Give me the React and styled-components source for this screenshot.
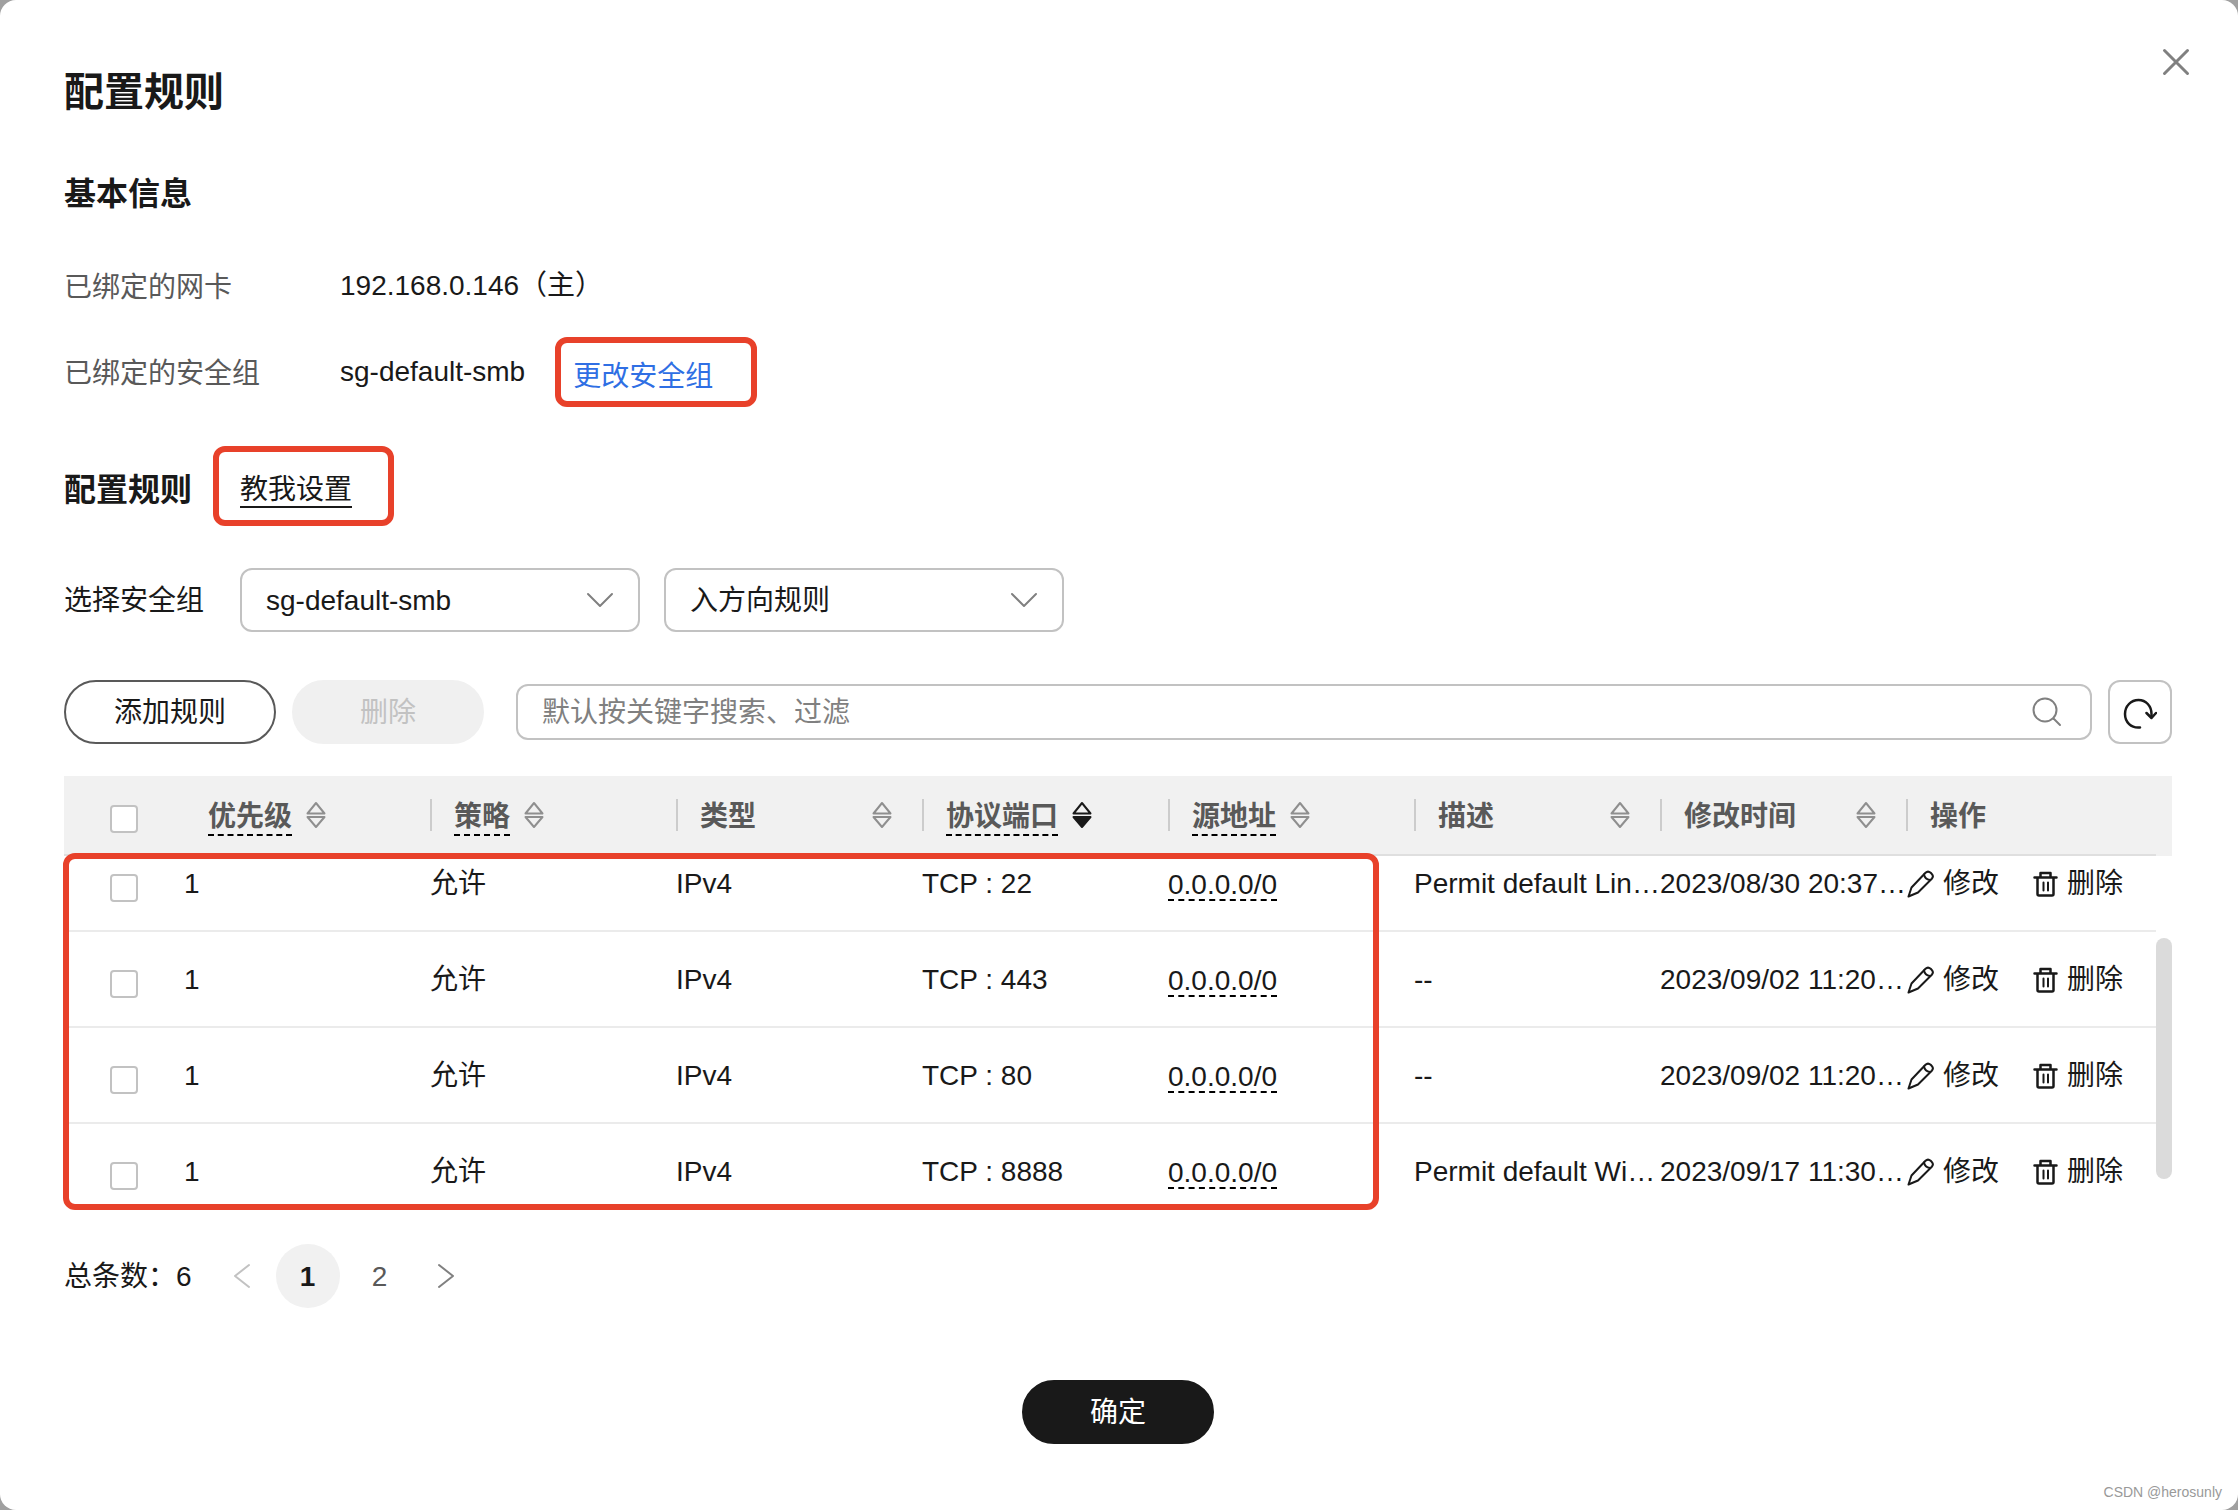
import React, { useLayoutEffect, useRef, useState } from "react";
import styled, { createGlobalStyle } from "styled-components";

const GlobalStyle = createGlobalStyle`
  *, *::before, *::after { box-sizing: border-box; }
  body {
    margin: 0;
    background: #a0a0a0;
  }
  body, button, input, select {
    font-family: "Liberation Sans", "Noto Sans CJK SC", sans-serif;
    font-size: 28px;
    line-height: 40px;
    color: #191919;
  }
  button { cursor: pointer; }
`;

const HEAD = 80;
const ROW = 96;
const VIEW = 340;
const ROWS_PER_PAGE = 5;

const Dialog = styled.main`
  position: relative;
  min-height: 100vh;
  padding: 48px 48px 66px 64px;
  border-radius: 16px;
  background: #fff;
`;

const DialogHeader = styled.header`
  display: flex;
  align-items: flex-start;
  justify-content: space-between;
`;

const Title = styled.h1`
  margin: 0;
  padding-top: 16px;
  font-size: 40px;
  line-height: 56px;
  font-weight: 700;
`;

const IconButton = styled.button`
  display: flex;
  align-items: center;
  justify-content: center;
  width: ${(p) => p.$width}px;
  height: ${(p) => p.$height}px;
  padding: 0;
  border: 0;
  background: none;
  color: ${(p) => p.$color || "#808080"};
`;

const Body = styled.div`
  padding-right: 18px;
`;

const SectionTitle = styled.h2`
  margin: 0;
  font-size: 32px;
  line-height: 48px;
  font-weight: 700;
`;

const BasicInfo = styled.section`
  padding-top: 50px;
`;

const InfoList = styled.dl`
  display: grid;
  grid-template-columns: 276px 1fr;
  row-gap: 42px;
  margin: 48px 0 0;
`;

const InfoLabel = styled.dt`
  line-height: 44px;
  color: #595959;
`;

const InfoValue = styled.dd`
  display: flex;
  align-items: center;
  height: 40px;
  margin: 0;
`;

const Marked = styled.span`
  display: flex;
  align-items: center;
  width: ${(p) => p.$width}px;
  height: ${(p) => p.$height}px;
  margin-left: ${(p) => p.$gap}px;
  padding: 10px 0 0 ${(p) => p.$pad}px;
  flex: none;
  border: 6px solid #e8412a;
  border-radius: 12px;
`;

const BlueLink = styled.a`
  color: #2f6fe4;
  text-decoration: none;
`;

const GuideLink = styled.a`
  color: #191919;
  line-height: 32px;
  border-bottom: 2px solid #191919;
  text-decoration: none;
`;

const RuleHeading = styled.div`
  display: flex;
  align-items: center;
  height: 80px;
  margin-top: 50px;

  & > h2 { padding-top: 8px; }
`;

const Filters = styled.div`
  display: flex;
  align-items: center;
  margin-top: 42px;
`;

const FilterLabel = styled.label`
  width: 176px;
  padding-top: 2px;
`;

const SelectBox = styled.span`
  display: grid;
  align-items: center;
  width: 400px;
  margin-right: 24px;
  color: #808080;

  & > * { grid-area: 1 / 1; }
  & > svg {
    justify-self: end;
    margin-right: 26px;
    pointer-events: none;
  }
`;

const Select = styled.select`
  width: 100%;
  height: 64px;
  padding: 2px 72px 0 24px;
  border: 2px solid #c2c2c2;
  border-radius: 12px;
  background: #fff;
  appearance: none;
`;

const Toolbar = styled.div`
  display: flex;
  align-items: center;
  gap: 16px;
  margin-top: 48px;
`;

const variants = {
  outline: "background: #fff; border-color: #595959; color: #191919;",
  disabled: "background: #f0f0f0; border-color: #f0f0f0; color: #c2c2c2; cursor: default;",
  primary: "background: #191919; border-color: #191919; color: #fff;",
};

const Pill = styled.button`
  width: ${(p) => p.$width}px;
  height: 64px;
  padding: 2px 0 0;
  flex: none;
  border: 2px solid;
  border-radius: 32px;
  ${(p) => variants[p.$variant]}
`;

const SearchBox = styled.label`
  display: flex;
  align-items: center;
  flex: 1;
  min-width: 0;
  height: 56px;
  margin-left: 16px;
  padding: 0 28px 0 24px;
  border: 2px solid #c2c2c2;
  border-radius: 12px;
  color: #808080;
`;

const SearchInput = styled.input`
  flex: 1;
  min-width: 0;
  padding: 2px 0 0;
  border: 0;
  outline: 0;
  background: none;

  &::placeholder { color: #808080; opacity: 1; }
`;

const RefreshButton = styled.button`
  display: flex;
  align-items: center;
  justify-content: center;
  width: 64px;
  height: 64px;
  padding: 0;
  flex: none;
  border: 2px solid #c2c2c2;
  border-radius: 12px;
  background: #fff;
`;

const TableFrame = styled.div`
  position: relative;
  display: flex;
  height: ${HEAD + VIEW}px;
  margin-top: 32px;
`;

const TableScroll = styled.div`
  flex: 1;
  min-width: 0;
  overflow-y: auto;
  scrollbar-width: none;
`;

const Track = styled.div`
  width: 16px;
  background: linear-gradient(#f1f1f1 ${HEAD}px, transparent ${HEAD}px);
  padding-top: ${HEAD}px;
`;

const Thumb = styled.div`
  width: 16px;
  border-radius: 8px;
  background: #dbdbdb;
`;

const TableMark = styled.div`
  position: absolute;
  z-index: 2;
  top: 77px;
  left: -1px;
  right: 793px;
  height: 357px;
  border: 6px solid #e8412a;
  border-radius: 12px;
  pointer-events: none;
`;

const Table = styled.table`
  width: 100%;
  table-layout: fixed;
  border-collapse: separate;
  border-spacing: 0;
`;

const HeadCell = styled.th`
  position: sticky;
  top: 0;
  z-index: 1;
  height: ${HEAD}px;
  padding: 0;
  background: #f1f1f1;
  border-bottom: 2px solid #dfdfdf;
  color: #595959;
  text-align: left;
  font-weight: 700;
`;

const HeadInner = styled.div`
  display: flex;
  align-items: center;
  gap: 14px;
  padding-right: 30px;
  justify-content: ${(p) => (p.$spread ? "space-between" : "flex-start")};
`;

const HeadText = styled.span`
  display: flex;
  align-items: center;

  &::before {
    content: "";
    width: 2px;
    height: 32px;
    margin-right: 22px;
    background: ${(p) => (p.$first ? "transparent" : "#cccccc")};
  }
`;

const HeadLabel = styled.span`
  padding-top: 6px;
  line-height: 34px;
  border-bottom: 2px dashed ${(p) => (p.$dashed ? "#000" : "transparent")};
`;

const SortButton = styled.button`
  display: flex;
  width: 20px;
  height: 28px;
  padding: 0;
  border: 0;
  background: none;
  color: ${(p) => (p.$active ? "#191919" : "#8f8f8f")};
`;

const Cell = styled.td`
  height: ${ROW}px;
  padding: 2px 0 0;
  border-bottom: 2px solid #ebebeb;
  white-space: nowrap;
  overflow: hidden;
  text-overflow: ellipsis;
`;

const CheckWrap = styled.span`
  display: flex;
  padding: 8px 0 0 46px;
`;

const Check = styled.input`
  width: 28px;
  height: 28px;
  margin: 0;
  border: 2px solid #c2c2c2;
  border-radius: 4px;
  background: #fff;
  appearance: none;

  &:checked { background: #191919; border-color: #191919; }
`;

const Address = styled.span`
  display: inline-block;
  vertical-align: middle;
  line-height: 28px;
  border-bottom: 2px dashed #000;
`;

const Actions = styled.div`
  display: flex;
  align-items: center;
  gap: 32px;
  padding-left: 1px;
`;

const ActionButton = styled.button`
  display: flex;
  align-items: center;
  gap: 8px;
  padding: 0;
  border: 0;
  background: none;
`;

const Pager = styled.nav`
  display: flex;
  align-items: center;
  gap: 18px;
  margin-top: 48px;
`;

const Total = styled.span`
  margin-right: 16px;
  padding-top: 2px;
`;

const Pages = styled.div`
  display: flex;
  gap: 8px;
`;

const PageButton = styled.button`
  width: 64px;
  height: 64px;
  padding: 2px 0 0;
  border: 0;
  border-radius: 50%;
  background: ${(p) => (p.$current ? "#f1f1f1" : "none")};
  color: ${(p) => (p.$current ? "#191919" : "#595959")};
  font-weight: ${(p) => (p.$current ? 700 : 400)};
`;

const DialogFooter = styled.footer`
  display: flex;
  justify-content: center;
  margin-top: 72px;
`;

const Watermark = styled.small`
  position: absolute;
  right: 16px;
  bottom: 8px;
  font-size: 14px;
  line-height: 20px;
  color: #999;
`;

const Svg = ({ w, h, sw = 2, children }) => (
  <svg
    width={w}
    height={h}
    viewBox={`0 0 ${w} ${h}`}
    fill="none"
    stroke="currentColor"
    strokeWidth={sw}
    strokeLinecap="round"
    strokeLinejoin="round"
    aria-hidden="true"
  >
    {children}
  </svg>
);

const CloseIcon = () => (
  <Svg w={28} h={28} sw={3}><path d="M2.5 2.5l23 23M25.5 2.5l-23 23" /></Svg>
);
const ChevronDown = () => (
  <Svg w={28} h={28}><path d="M2 8l12 12L26 8" /></Svg>
);
const ChevronLeft = () => (
  <Svg w={32} h={32}><path d="M23 5L9 16l14 11" /></Svg>
);
const ChevronRight = () => (
  <Svg w={32} h={32}><path d="M9 5l14 11L9 27" /></Svg>
);
const SearchIcon = () => (
  <Svg w={30} h={30}><circle cx="13" cy="13" r="11.5" /><path d="M21.5 21.5l6.5 6.5" /></Svg>
);
const RefreshIcon = () => (
  <Svg w={34} h={34} sw={2.5}>
    <path d="M17 32.500C8 33.500 2 27 2 19C2 11 8 5 15.500 5C23 5 28.500 11 28.500 19V22" />
    <path d="M23.500 18l5 5 4.500-5" />
  </Svg>
);
const SortIcon = ({ active }) => (
  <Svg w={20} h={28}>
    <path d="M10 2L18.500 12.500h-17z" />
    <path d="M10 26L18.500 16h-17z" fill={active ? "currentColor" : "none"} />
  </Svg>
);
const PencilIcon = () => (
  <Svg w={28} h={28}>
    <path d="M1.500 26.500l3-9L18.500 2.800c1.400-1.400 3.600-1.400 5.200 0l.900.900c1.500 1.500 1.500 3.600.200 5L11 22.500z" />
    <path d="M17 4.500c.5 3 2.500 5 6 5.500" />
  </Svg>
);
const TrashIcon = () => (
  <Svg w={28} h={28} sw={2.5}>
    <path d="M3.500 7.500h22M9.500 7V3h10v4M6.500 8v16a1.500 1.500 0 0 0 1.500 1.500h13a1.500 1.500 0 0 0 1.500-1.500V8" />
    <path d="M12.500 12.500v8M17 12.500v8" strokeWidth="2" />
  </Svg>
);

const columns = [
  { label: "优先级", dashed: true },
  { label: "策略", dashed: true },
  { label: "类型" },
  { label: "协议端口", dashed: true, active: true },
  { label: "源地址", dashed: true },
  { label: "描述" },
  { label: "修改时间" },
];

const rules = [
  { port: "TCP : 22", note: "Permit default Lin…", time: "2023/08/30 20:37…" },
  { port: "TCP : 443", note: "--", time: "2023/09/02 11:20…" },
  { port: "TCP : 80", note: "--", time: "2023/09/02 11:20…" },
  { port: "TCP : 8888", note: "Permit default Wi…", time: "2023/09/17 11:30…" },
];

function RuleTable() {
  const scroller = useRef(null);
  const [offset, setOffset] = useState(20);

  useLayoutEffect(() => {
    scroller.current.scrollTop = 20;
  }, []);

  const ratio = VIEW / (ROWS_PER_PAGE * ROW);
  const thumb = {
    height: Math.round(VIEW * ratio),
    marginTop: Math.round((ROW + offset) * ratio),
  };

  return (
    <TableFrame>
      <TableScroll ref={scroller} onScroll={(e) => setOffset(e.currentTarget.scrollTop)}>
        <Table>
          <colgroup>
            <col style={{ width: 120 }} />
            {columns.map((c) => <col key={c.label} />)}
            <col style={{ width: 250 }} />
          </colgroup>
          <thead>
            <tr>
              <HeadCell>
                <CheckWrap><Check type="checkbox" aria-label="全选" /></CheckWrap>
              </HeadCell>
              {columns.map((c, i) => (
                <HeadCell key={c.label} scope="col">
                  <HeadInner $spread={!c.dashed}>
                    <HeadText $first={i === 0}>
                      <HeadLabel $dashed={c.dashed}>{c.label}</HeadLabel>
                    </HeadText>
                    <SortButton type="button" $active={c.active} aria-label={c.label}>
                      <SortIcon active={c.active} />
                    </SortButton>
                  </HeadInner>
                </HeadCell>
              ))}
              <HeadCell scope="col">
                <HeadText><HeadLabel>操作</HeadLabel></HeadText>
              </HeadCell>
            </tr>
          </thead>
          <tbody>
            {rules.map((r) => (
              <tr key={r.port}>
                <Cell>
                  <CheckWrap><Check type="checkbox" aria-label={r.port} /></CheckWrap>
                </Cell>
                <Cell>1</Cell>
                <Cell>允许</Cell>
                <Cell>IPv4</Cell>
                <Cell>{r.port}</Cell>
                <Cell><Address>0.0.0.0/0</Address></Cell>
                <Cell>{r.note}</Cell>
                <Cell>{r.time}</Cell>
                <Cell>
                  <Actions>
                    <ActionButton type="button"><PencilIcon />修改</ActionButton>
                    <ActionButton type="button"><TrashIcon />删除</ActionButton>
                  </Actions>
                </Cell>
              </tr>
            ))}
          </tbody>
        </Table>
      </TableScroll>
      <Track><Thumb style={thumb} /></Track>
      <TableMark />
    </TableFrame>
  );
}

export default function App() {
  return (
    <Dialog>
      <GlobalStyle />
      <DialogHeader>
        <Title>配置规则</Title>
        <IconButton type="button" $width={28} $height={28} aria-label="关闭"><CloseIcon /></IconButton>
      </DialogHeader>
      <Body>
        <BasicInfo>
          <SectionTitle>基本信息</SectionTitle>
          <InfoList>
            <InfoLabel>已绑定的网卡</InfoLabel>
            <InfoValue>192.168.0.146（主）</InfoValue>
            <InfoLabel>已绑定的安全组</InfoLabel>
            <InfoValue>
              sg-default-smb
              <Marked $width={202} $height={70} $gap={30} $pad={12}>
                <BlueLink href="#change">更改安全组</BlueLink>
              </Marked>
            </InfoValue>
          </InfoList>
        </BasicInfo>

        <section>
          <RuleHeading>
            <SectionTitle>配置规则</SectionTitle>
            <Marked $width={181} $height={80} $gap={21} $pad={21}>
              <GuideLink href="#guide">教我设置</GuideLink>
            </Marked>
          </RuleHeading>

          <Filters>
            <FilterLabel htmlFor="group">选择安全组</FilterLabel>
            <SelectBox>
              <Select id="group"><option>sg-default-smb</option></Select>
              <ChevronDown />
            </SelectBox>
            <SelectBox>
              <Select aria-label="方向"><option>入方向规则</option></Select>
              <ChevronDown />
            </SelectBox>
          </Filters>

          <Toolbar>
            <Pill type="button" $variant="outline" $width={212}>添加规则</Pill>
            <Pill type="button" $variant="disabled" $width={192} disabled>删除</Pill>
            <SearchBox>
              <SearchInput type="text" placeholder="默认按关键字搜索、过滤" />
              <SearchIcon />
            </SearchBox>
            <RefreshButton type="button" aria-label="刷新"><RefreshIcon /></RefreshButton>
          </Toolbar>

          <RuleTable />

          <Pager aria-label="分页">
            <Total>总条数：6</Total>
            <IconButton type="button" $width={32} $height={32} $color="#c2c2c2" aria-label="上一页">
              <ChevronLeft />
            </IconButton>
            <Pages>
              <PageButton type="button" $current>1</PageButton>
              <PageButton type="button">2</PageButton>
            </Pages>
            <IconButton type="button" $width={32} $height={32} aria-label="下一页">
              <ChevronRight />
            </IconButton>
          </Pager>
        </section>

        <DialogFooter>
          <Pill type="button" $variant="primary" $width={192}>确定</Pill>
        </DialogFooter>
      </Body>
      <Watermark>CSDN @herosunly</Watermark>
    </Dialog>
  );
}
